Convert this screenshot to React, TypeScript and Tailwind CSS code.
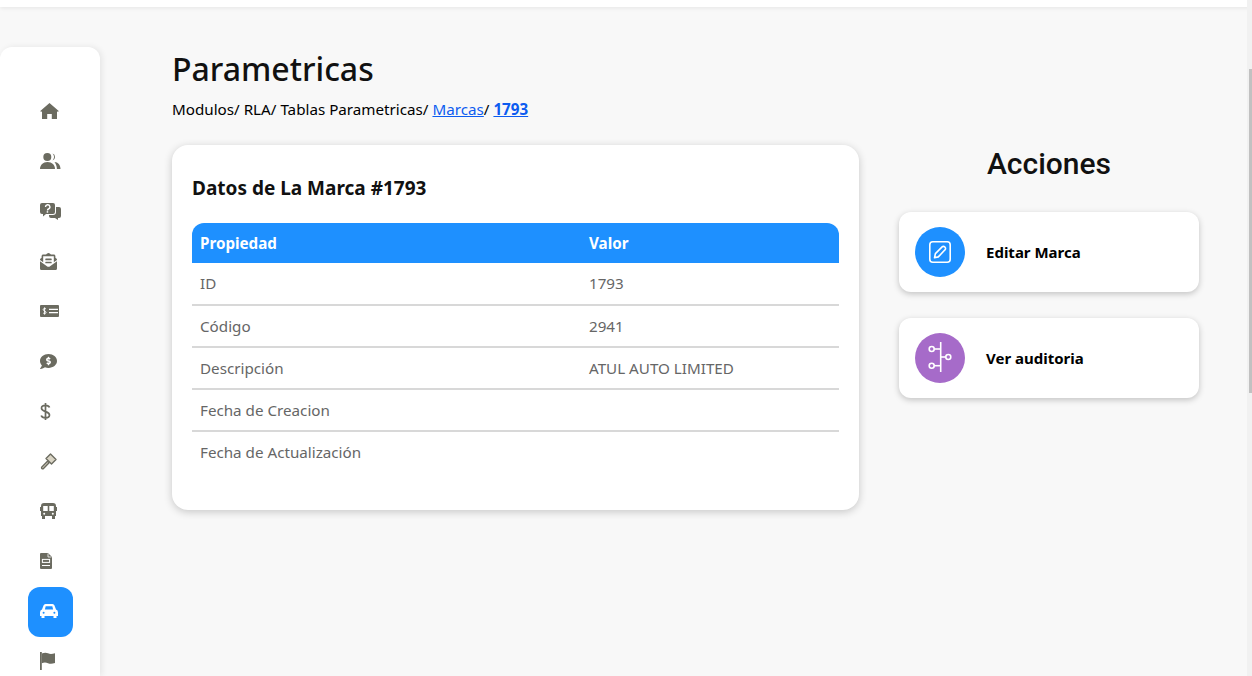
import { FaEnvelopeOpenText, FaCommentDollar } from "react-icons/fa";
import type { ReactNode } from "react";

const iconColor = "#6b6b60";

const HomeIcon = () => (
  <svg viewBox="0 0 19 16" width="19" height="16" fill={iconColor}>
    <path d="M9.500 0L19 8.300l-2 .5V16h-5.200v-5H7.200v5H2V8.800L0 8.300z" />
  </svg>
);

const UsersIcon = () => (
  <svg viewBox="0 0 21 16" width="21" height="16" fill={iconColor}>
    <circle cx="7.300" cy="4" r="4" />
    <path d="M0 16c0-4 3-7 7.500-7s7.500 3 7.500 7z" />
    <path d="M12.600 .6a3.600 3.600 0 0 1 0 6.800 5.200 5.200 0 0 0 0-6.800z" />
    <path d="M14.500 9c3.500 0 6 3 6 7h-3.600c0-3-1-5-2.400-7z" />
  </svg>
);

const QuestionChat = () => (
  <svg viewBox="0 0 21 17" width="21" height="17" fill={iconColor}>
    <path d="M2 0h11a2 2 0 0 1 2 2v7a2 2 0 0 1-2 2H6l-3 2.500V11H2a2 2 0 0 1-2-2V2a2 2 0 0 1 2-2z" />
    <path d="M16 4h3a2 2 0 0 1 2 2v7a2 2 0 0 1-2 2h-1v2l-3-2h-4a2 2 0 0 1-2-2v-1h4a3 3 0 0 0 3-3z" />
    <path d="M5.500 4a2.200 2.200 0 1 1 3 2c-.7.3-1 .7-1 1.400" fill="none" stroke="#fff" strokeWidth="1.400" />
    <rect x="6.700" y="8.200" width="1.500" height="1.500" fill="#fff" />
  </svg>
);

const MoneyIcon = () => (
  <svg viewBox="0 0 19 12" width="19" height="12">
    <rect width="19" height="12" rx="1" fill={iconColor} />
    <path d="M6 4c-.4-.7-2.800-.9-2.800 .6S6 5.900 6 7.400 3.600 8.700 3.200 8M4.600 2.400v7.200" fill="none" stroke="#fff" strokeWidth="1" />
    <path d="M9 4.300h9M9 7.700h9" stroke="#fff" strokeWidth="1.300" />
  </svg>
);

const DollarIcon = () => (
  <svg viewBox="0 0 11 17" width="11" height="17" fill="none" stroke={iconColor} strokeWidth="1.700">
    <path d="M9.500 4.500C9 3 7.500 2.300 5.500 2.300 3 2.300 1.500 3.400 1.500 5.200c0 4 8 2.800 8 6.800 0 1.800-1.600 2.800-4 2.800-2.200 0-3.800-.8-4.300-2.300M5.500 0v17" />
  </svg>
);

const GavelIcon = () => (
  <svg viewBox="0 0 17 17" width="17" height="17" fill="none" stroke={iconColor} strokeWidth="1.400" strokeLinejoin="round">
    <path d="M10.500 1l5.500 5.500-4.500 4.500L6 5.500z" fill="#d9d4c4" />
    <path d="M7.500 8.200l1.600 1.600-5.600 5.700a1.100 1.100 0 0 1-1.600-1.600z" fill="#d9d4c4" />
  </svg>
);

const BusIcon = () => (
  <svg viewBox="0 0 17 16" width="17" height="16" fill={iconColor}>
    <path d="M4 0h9a3 3 0 0 1 3 3v10h-1v3h-3v-3H5v3H2v-3H1V3a3 3 0 0 1 3-3z" />
    <rect x="3.200" y="3" width="4.500" height="5" fill="#fff" />
    <rect x="9.300" y="3" width="4.500" height="5" fill="#fff" />
    <circle cx="4.200" cy="10.700" r="1" fill="#fff" />
    <circle cx="12.800" cy="10.700" r="1" fill="#fff" />
    <rect y="4" width="1" height="4" />
    <rect x="16" y="4" width="1" height="4" />
  </svg>
);

const FileIcon = () => (
  <svg viewBox="0 0 12 16" width="12" height="16">
    <path d="M1 0h7l4 4v11a1 1 0 0 1-1 1H1a1 1 0 0 1-1-1V1a1 1 0 0 1 1-1z" fill={iconColor} />
    <path d="M8 .5V4h3.500" fill="none" stroke="#fff" strokeWidth=".8" />
    <rect x="2.400" y="6.400" width="7.200" height="3" fill="none" stroke="#fff" strokeWidth="1" />
    <path d="M2 12.500h8" stroke="#fff" strokeWidth="1" />
  </svg>
);

const CarIcon = () => (
  <svg viewBox="0 0 18 14" width="18" height="14">
    <path
      d="M3.500 1.500Q4 0 5.500 0h7q1.500 0 2 1.500L16 5.500q2 .5 2 3V12h-1.500v2h-3v-2h-9v2h-3v-2H0V8.500q0-2.500 2-3z"
      fill="#fff"
    />
    <path d="M5.700 2.200h6.600l.8 3.300H4.900z" fill="#1e90ff" />
    <circle cx="3.600" cy="8.700" r="1" fill="#1e90ff" />
    <circle cx="14.400" cy="8.700" r="1" fill="#1e90ff" />
  </svg>
);

const FlagIcon = () => (
  <svg viewBox="0 0 15 18" width="15" height="18" fill={iconColor}>
    <rect width="1.800" height="18" />
    <path d="M1.800 1.500Q5.500 0 8 1.300t7 0V11Q11 12.500 8 11.200t-6.200 0z" />
  </svg>
);

const navItems: { icon: ReactNode; active?: boolean }[] = [
  { icon: <HomeIcon /> },
  { icon: <UsersIcon /> },
  { icon: <QuestionChat /> },
  { icon: <FaEnvelopeOpenText size={17} /> },
  { icon: <MoneyIcon /> },
  { icon: <FaCommentDollar size={17} /> },
  { icon: <DollarIcon /> },
  { icon: <GavelIcon /> },
  { icon: <BusIcon /> },
  { icon: <FileIcon /> },
  { icon: <CarIcon />, active: true },
  { icon: <FlagIcon /> },
];

const rows = [
  ["ID", "1793"],
  ["Código", "2941"],
  ["Descripción", "ATUL AUTO LIMITED"],
  ["Fecha de Creacion", ""],
  ["Fecha de Actualización", ""],
];

const EditIcon = () => (
  <svg viewBox="0 0 22 22" width="22" height="22" fill="none" stroke="#fff" strokeWidth="1.600" strokeLinejoin="round">
    <rect x=".8" y=".8" width="20.400" height="20.400" rx="3" />
    <path d="M5.500 16.800l.9-4.200 6.700-6.700a1.800 1.800 0 0 1 2.600 0l.3 .3a1.800 1.800 0 0 1 0 2.600L9.300 15.900z" />
  </svg>
);

const TimelineIcon = () => (
  <svg viewBox="0 0 24 34" width="24" height="34" fill="none" stroke="#fff" strokeWidth="1.600">
    <path d="M12.700 1v30" />
    <circle cx="3.700" cy="8" r="2.500" />
    <path d="M6.200 8h6.500" />
    <circle cx="20.300" cy="16" r="2.500" />
    <path d="M12.700 16h5.100" />
    <circle cx="3.700" cy="24.700" r="2.500" />
    <path d="M6.200 24.700h6.500" />
  </svg>
);

const ActionCard = ({ icon, color, label }: { icon: ReactNode; color: string; label: string }) => (
  <div className="flex items-center h-20 pl-4 bg-white rounded-xl shadow-[0_2px_6px_rgba(0,0,0,0.22)]">
    <div className={`flex justify-center items-center w-[50px] h-[50px] rounded-full ${color}`}>{icon}</div>
    <span className="ml-[21px] text-[15px] font-bold text-black">{label}</span>
  </div>
);

const App = () => {
  return (
    <div className="relative flex flex-col h-screen overflow-hidden bg-[#f8f8f8] font-['Noto_Sans',sans-serif] text-black">
      <div className="shrink-0 h-[7px] bg-white shadow-[0_1px_4px_rgba(0,0,0,0.08)]" />
      <div className="flex flex-1 min-h-0">
        <aside className="shrink-0 w-[100px] mt-10 pt-10 bg-white rounded-t-xl shadow-[2px_0_6px_rgba(0,0,0,0.08)]">
          <nav className="flex flex-col items-start pl-7 text-[#6b6b60]">
            {navItems.map((item, i) => (
              <div
                key={i}
                className={`flex shrink-0 items-center w-[45px] h-[50px] pl-3 pb-[2px] rounded-xl ${
                  item.active ? "bg-[#1e90ff] text-white" : ""
                }`}
              >
                {item.icon}
              </div>
            ))}
          </nav>
        </aside>
        <main className="flex-1 min-w-0 pl-[72px] pt-[37px]">
          <h1 className="text-[32px] leading-[50px] font-medium text-[#111]">Parametricas</h1>
          <p className="mt-[5px] text-[15.200px] leading-[20px]">
            Modulos/ RLA/ Tablas Parametricas/ <a href="#" className="text-[#0d5cf0] underline">Marcas</a>/{" "}
            <a href="#" className="font-bold text-[#0d5cf0] underline">1793</a>
          </p>
          <div className="flex items-start gap-10 mt-[26px]">
            <section className="w-[687px] h-[365px] px-5 pt-[28px] bg-white rounded-2xl shadow-[0_2px_8px_rgba(0,0,0,0.2)]">
              <h2 className="text-[19px] leading-[30px] font-bold text-[#111]">Datos de La Marca #1793</h2>
              <table className="w-full mt-[20px] text-[15.200px] border-collapse">
                <thead>
                  <tr className="h-10 text-white font-bold bg-[#1e90ff]">
                    <th className="w-[397px] pl-2 text-left rounded-tl-xl">Propiedad</th>
                    <th className="text-left rounded-tr-xl">Valor</th>
                  </tr>
                </thead>
                <tbody>
                  {rows.map(([name, value], i) => (
                    <tr
                      key={name}
                      className={`h-[42px] text-[#666] ${i < rows.length - 1 ? "border-b-2 border-[#d8d8d8]" : ""}`}
                    >
                      <td className="pl-2">{name}</td>
                      <td>{value}</td>
                    </tr>
                  ))}
                </tbody>
              </table>
            </section>
            <section className="w-[300px]">
              <h2 className="text-center font-['Roboto',sans-serif] text-[30px] leading-[38px] font-medium text-[#111]">
                Acciones
              </h2>
              <div className="flex flex-col gap-[26px] mt-[29px]">
                <ActionCard icon={<EditIcon />} color="bg-[#1e90ff]" label="Editar Marca" />
                <ActionCard icon={<TimelineIcon />} color="bg-[#a66bc9]" label="Ver auditoria" />
              </div>
            </section>
          </div>
        </main>
      </div>
      {/* browser scrollbar */}
      <div className="absolute top-0 right-0 bottom-0 w-[5px] bg-[#f1f1f1]">
        <div className="mt-[69px] ml-[2px] h-[324px] bg-[#c1c1c1]" />
      </div>
    </div>
  );
};

export default App;
